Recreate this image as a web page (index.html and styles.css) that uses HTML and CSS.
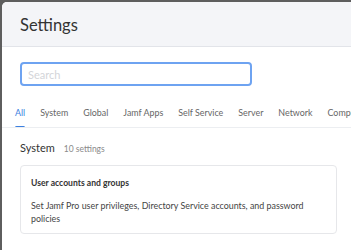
FILE: index.html
```html
<!doctype html>
<html>
<head>
    <meta charset='utf-8'>
    <title>Settings</title>
    <link rel="stylesheet" href="styles.css">
</head>
<body>
<div class='modal'>
    <div class='head'>
        <h1>Settings</h1>
    </div>
    <div class='searchwrap'>
        <input class='search' type='text' placeholder='Search'>
    </div>
    <div class='tabs'>
        <span class='tab on'>All</span>
        <span class='tab'>System</span>
        <span class='tab'>Global</span>
        <span class='tab'>Jamf Apps</span>
        <span class='tab'>Self Service</span>
        <span class='tab'>Server</span>
        <span class='tab'>Network</span>
        <span class='tab'>Computer management</span>
    </div>
    <div class='group'>
        <div class='grouphead'>
            <span class='gname'>System</span>
            <span class='gcount'>10 settings</span>
        </div>
        <div class='card'>
            <div class='ctitle'>User accounts and groups</div>
            <div class='cdesc'>Set Jamf Pro user privileges, Directory Service accounts, and password policies</div>
        </div>
    </div>
</div>
</body>
</html>
```

FILE: styles.css
```css
*{margin:0;padding:0;box-sizing:border-box;}
html,body{height:100%;overflow:hidden;}
body{background:#5e5e5e;padding:2px 0 0 2px;font-family:Lato,"Open Sans",sans-serif;}
.modal{width:349px;height:248px;background:#fff;border-top-left-radius:5px;overflow:hidden;}

.head{height:45px;background:#f4f5f8;border-bottom:1px solid #e2e4e9;padding:1px 0 0 18px;display:flex;align-items:center;}
.head h1{font-size:16.5px;font-weight:normal;color:#333;}

.searchwrap{padding:15px 0 0 18px;}
.search{display:block;width:232px;height:24px;border:2px solid #6ea3f1;border-radius:4px;padding:0 6px;font-family:inherit;font-size:11px;color:#333;outline:none;}
.search::placeholder{color:#d3d5d9;}

.tabs{margin-top:18px;height:24px;border-bottom:1px solid #eceef1;display:flex;gap:15px;padding-left:13px;white-space:nowrap;overflow:hidden;}
.tab{font-size:8.9px;color:#666;height:23px;line-height:17px;position:relative;flex:none;}
.tab.on{color:#3c80e0;}
.tab.on:after{content:'';position:absolute;left:0;right:0;bottom:-2px;height:3px;border-radius:2px;background:#3c80e0;}

.group{padding:13px 0 0 18px;}
.grouphead{display:flex;align-items:baseline;gap:9px;height:24px;}
.gname{font-size:11px;color:#333;}
.gcount{font-size:8.5px;color:#8a8a8a;}
.card{width:317px;height:69px;border:1px solid #e6e7ea;border-radius:4px;padding:12px 10px 0 10px;}
.ctitle{font-size:8.6px;font-weight:bold;color:#333;}
.cdesc{margin-top:11px;font-size:8.9px;line-height:13px;color:#444;}
```
